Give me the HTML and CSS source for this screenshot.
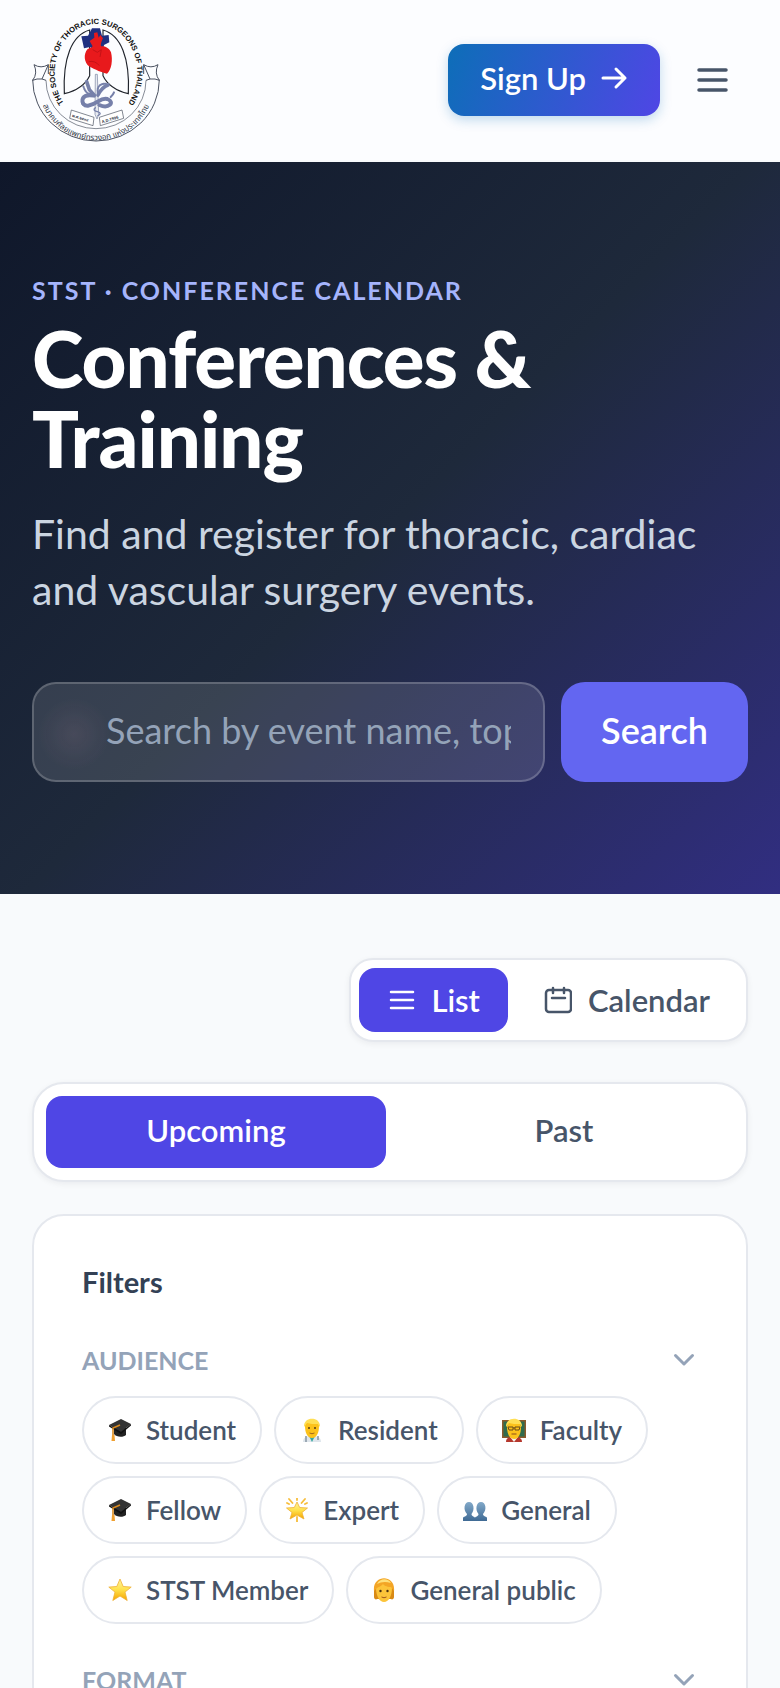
FILE: index.html
```html
<!DOCTYPE html>
<html lang="en">
<head>
<meta charset="utf-8">
<meta name="viewport" content="width=device-width, initial-scale=1">
<title>Conferences &amp; Training</title>
<link rel="stylesheet" href="styles.css">
</head>
<body>
<svg class="defs" aria-hidden="true">
  <defs>
    <linearGradient id="gold" x1="0" y1="0" x2="0" y2="1"><stop offset="0" stop-color="#fff3a0"/><stop offset=".5" stop-color="#ffe14a"/><stop offset="1" stop-color="#f5a300"/></linearGradient>
    <linearGradient id="blue" x1="0" y1="0" x2="0" y2="1"><stop offset="0" stop-color="#82a9c9"/><stop offset="1" stop-color="#3f6a94"/></linearGradient>
    <symbol id="cap" viewBox="0 0 24 24">
      <path d="M6 10v6c2 3 9 4 12 1v-7z" fill="#222"/>
      <path d="M1 7 13 1l10 5-10 8z" fill="#333"/>
      <path d="M1 7 13 14l10-8v1.500L13 16 1 8.500z" fill="#111"/>
      <path d="M12 7 5 10v8" fill="none" stroke="#d98a1f" stroke-width="1.600"/>
      <path d="M4 17h2.500l.5 6H3.500z" fill="#f0a030"/>
    </symbol>
    <symbol id="doctor" viewBox="0 0 24 24">
      <path d="M3 24c0-5 4-6 9-6s9 1 9 6z" fill="#dfe6ec"/>
      <path d="m9 18 3 6 3-6z" fill="#35a7a0"/>
      <path d="M6 18v6M18 18v4" stroke="#8795a3" stroke-width="1.500"/>
      <path d="M5 8c0-9 14-9 14 0 0 6-2 12-7 12S5 14 5 8z" fill="#fcc21b"/>
      <path d="M4 9C3-2 21-2 20 9l-2-3c-4 0-8 0-11-1z" fill="#ffdf55"/>
      <circle cx="9" cy="10" r="1" fill="#543b18"/><circle cx="15" cy="10" r="1" fill="#543b18"/>
      <path d="M9.500 15q2.500 1.500 5 0" stroke="#a0661c" fill="none"/>
    </symbol>
    <symbol id="teacher" viewBox="0 0 24 24">
      <path d="M0 2h24v18H0z" fill="#8b5a2b"/><path d="M1.500 3.500h21v15h-21z" fill="#2f6b4c"/>
      <path d="M4 24c0-4 3-5 8-5s8 1 8 5z" fill="#b5372c"/><path d="m8 19 4 5 4-5z" fill="#f4f1e8"/>
      <path d="M5 9c0-9 14-9 14 0 0 6-2 12-7 12S5 15 5 9z" fill="#fcc21b"/>
      <path d="M4 9C3-2 21-2 20 9l-2-3c-4 0-8 0-11-1z" fill="#ffdf55"/>
      <path d="M6 9h5v3H7zM13 9h5l-1 3h-4zM11 10h2" fill="none" stroke="#6b4a18"/>
      <path d="M9.500 16h5" stroke="#8d4c1c"/>
    </symbol>
    <symbol id="star" viewBox="0 0 24 24">
      <path d="m12 1 3.200 7.500 8 .6-6.200 5 2.200 8.400L12 18l-7.200 4.500L7 14.100l-6.200-5 8-.6z" fill="url(#gold)" stroke="#efb035" stroke-width=".8" stroke-linejoin="round"/>
    </symbol>
    <symbol id="glow" viewBox="0 0 24 24">
      <path d="m12 4 2.700 5.500 7.800.5-5.500 4.500 2 6.500-7-4-7 4 2-6.500L1.500 10l7.800-.5z" fill="url(#gold)" stroke="#efb035" stroke-width=".8" stroke-linejoin="round"/>
      <path d="m4 1 3.500 4M20 1l-3.500 4M12 0v2M2 5l2 1M22 5l-2 1M12 19v5" stroke="#f7bd3a" stroke-width="1.800" stroke-linecap="round"/>
    </symbol>
    <symbol id="people" viewBox="0 0 24 24">
      <g fill="url(#blue)"><path d="M0 23v-3c0-2 4-1 4-4-4-4-3-12 2-12s6 8 2.500 12c0 3 3.500 2 3.500 4v3z"/><path d="M12 23v-3c0-2 3.500-1 3.500-4C12 12 13 4 18 4s6 8 2 12c0 3 4 2 4 4v3z"/></g>
    </symbol>
    <symbol id="person" viewBox="0 0 24 24">
      <path d="M2 10h20v9c0 2-2 3-3 2H5c-1 1-3 0-3-2z" fill="#d98a16"/>
      <path d="M4 10c0-11 16-11 16 0 0 7-3 14-8 14S4 17 4 10z" fill="#fcc43a"/>
      <path d="M2 13C0-4 24-4 22 13l-3-4c-5 0-7-2-8-3-1 2-5 3-6 4z" fill="#f3a526"/>
      <path d="M5 6c3-6 11-6 14-1-6-2-10-1-14 1z" fill="#ffe07a"/>
      <circle cx="8.500" cy="13" r="1.200" fill="#4b3210"/><circle cx="15.500" cy="13" r="1.200" fill="#4b3210"/>
      <path d="M9.500 19q2.500 1.500 5 0" stroke="#a0561c" fill="none"/>
    </symbol>
    <symbol id="chevron" viewBox="0 0 28 28"><path d="m5.500 9.500 8.500 8.500 8.500-8.500" fill="none" stroke="currentColor" stroke-width="3" stroke-linecap="round" stroke-linejoin="round"/></symbol>
  </defs>
</svg>

<header class="topbar">
  <a class="logo" href="#" aria-label="The Society of Thoracic Surgeons of Thailand">
    <svg viewBox="36 33 384 384" width="128" height="128">
      <defs>
        <path id="arc-top" d="M141 307A124 146 0 1 1 315 307"/>
        <path id="arc-low" d="M55 236A173 170 0 0 0 401 236"/>
      </defs>
      <g fill="none" stroke="#4a5160" stroke-width="3">
        <path d="M38 224A190 184 0 0 0 418 224"/>
        <path d="M78 226A150 145 0 0 0 378 226" stroke-width="2"/>
        <path d="M38 226Q54 205 42 179Q63 192 85 179L66 222M85 179V207M38 226Q50 220 66 222L78 226"/>
        <path d="M418 226Q402 205 414 179Q393 192 371 179L390 222M371 179V207M418 226Q406 220 390 222L378 226"/>
      </g>
      <g fill="none" stroke="#20242c" stroke-width="3.500">
        <path d="M209 75C155 90 128 160 133 266Q190 252 209 212Z"/>
        <path d="M249 75C303 90 330 160 325 266Q268 252 249 212Z"/>
      </g>
      <path d="M184 94l20-2 12-22h24l6 22 20-2 2 22-16 8-8 16h-20l-14-10-18 4z" fill="#203080"/>
      <path d="M203 132c-14 16-10 40 4 52 18 10 40 20 54 22 14-10 18-42 12-64-6-16-22-20-30-18-2-8 4-20 6-24l-8-10-5 8-4-16-10 2 1 14-14 10 8 14c2 6-8 6-14 10z" fill="#e8191c"/>
      <path d="M218 134l14 8 12-8-4 22M206 170q20-4 32 12" fill="none" stroke="#b40f14" stroke-width="2"/>
      <path d="M226 208h6l4 120-5 14-6-14z" fill="#e8ebf2" stroke="#78829f" stroke-width="2"/>
      <g fill="none" stroke="#7680aa" stroke-linecap="round">
        <path d="M200 230l8 24 14 16M264 240q-18 6-30 30" stroke-width="11"/>
        <path d="M190 244q8 24 24 24M258 236q-30 0-24 30" stroke-width="6" stroke-dasharray="3 3"/>
        <path d="M222 272c-44-10-42 32-18 30 30-4 36-26 58-20 24 10 4 30-24 18" stroke-width="12"/>
        <path d="M204 302q-26 0-15-18M272 276q8-8 10-14" stroke-width="6"/>
        <path d="M226 308q-10 8 6 12t2 12" stroke-width="4"/>
      </g>
      <g fill="#fff" stroke="#444b5a" stroke-width="2">
        <path d="m154 315 68 22-3 25-70-22z"/><path d="m306 315-68 22 3 25 70-22z"/>
      </g>
      <text class="seal-year" x="155" y="335" transform="rotate(17 155 335)">พ.ศ.๒๕๓๙</text>
      <text class="seal-year" x="247" y="355" transform="rotate(-17 247 355)">A.D.1996</text>
      <text class="seal-en"><textPath href="#arc-top" startOffset="50%" text-anchor="middle">THE SOCIETY OF THORACIC SURGEONS OF THAILAND</textPath></text>
      <text class="seal-th"><textPath href="#arc-low" startOffset="50%" text-anchor="middle">สมาคมศัลยแพทย์ทรวงอก แห่งประเทศไทย</textPath></text>
    </svg>
  </a>
  <div class="actions">
    <button class="signup" type="button">Sign Up
      <svg viewBox="0 0 28 28" width="28" height="28" aria-hidden="true"><path d="M3 14h22M16 5l9 9-9 9" fill="none" stroke="currentColor" stroke-width="3" stroke-linecap="round" stroke-linejoin="round"/></svg>
    </button>
    <button class="menu" type="button" aria-label="Menu">
      <svg viewBox="0 0 40 40" width="40" height="40" aria-hidden="true"><path d="M7 10h27M7 20h27M7 30h27" stroke="currentColor" stroke-width="3.500" stroke-linecap="round"/></svg>
    </button>
  </div>
</header>

<section class="hero">
  <p class="eyebrow">STST · Conference Calendar</p>
  <h1>Conferences &amp; Training</h1>
  <p class="lead">Find and register for thoracic, cardiac and vascular surgery events.</p>
  <form class="search">
    <input type="text" aria-label="Search events" placeholder="Search by event name, topic or venue">
    <button type="submit">Search</button>
  </form>
</section>

<main class="content">
  <div class="view-toggle">
    <button class="active" type="button" aria-pressed="true">
      <svg viewBox="0 0 28 28" width="28" height="28" aria-hidden="true"><path d="M4 6h22M4 14h22M4 22h22" stroke="currentColor" stroke-width="2.500" stroke-linecap="round"/></svg>List
    </button>
    <button type="button" aria-pressed="false">
      <svg viewBox="0 0 28 28" width="28" height="28" aria-hidden="true"><g fill="none" stroke="currentColor" stroke-width="2.500" stroke-linecap="round" stroke-linejoin="round"><rect x="2" y="4" width="25" height="22" rx="3"/><path d="M9 2v5M20 2v5M8 12h13"/></g></svg>Calendar
    </button>
  </div>

  <div class="tabs">
    <button class="active" type="button" aria-pressed="true">Upcoming</button>
    <button type="button" aria-pressed="false">Past</button>
  </div>

  <section class="filters">
    <h2>Filters</h2>
    <button class="group" type="button" aria-expanded="true">Audience<svg width="28" height="28" aria-hidden="true"><use href="#chevron"/></svg></button>
    <div class="chips">
      <button type="button"><svg width="24" height="24" aria-hidden="true"><use href="#cap"/></svg>Student</button>
      <button type="button"><svg width="24" height="24" aria-hidden="true"><use href="#doctor"/></svg>Resident</button>
      <button type="button"><svg width="24" height="24" aria-hidden="true"><use href="#teacher"/></svg>Faculty</button>
      <button type="button"><svg width="24" height="24" aria-hidden="true"><use href="#cap"/></svg>Fellow</button>
      <button type="button"><svg width="24" height="24" aria-hidden="true"><use href="#glow"/></svg>Expert</button>
      <button type="button"><svg width="24" height="24" aria-hidden="true"><use href="#people"/></svg>General</button>
      <button type="button"><svg width="24" height="24" aria-hidden="true"><use href="#star"/></svg>STST Member</button>
      <button type="button"><svg width="24" height="24" aria-hidden="true"><use href="#person"/></svg>General public</button>
    </div>
    <button class="group" type="button" aria-expanded="false">Format<svg width="28" height="28" aria-hidden="true"><use href="#chevron"/></svg></button>
  </section>
</main>
</body>
</html>
```
FILE: styles.css
```css
* {
  box-sizing: border-box;
}

body {
  margin: 0;
  background: #f8fafc;
  color: #475569;
  font-family: Lato, "Noto Sans", sans-serif;
}

button,
input {
  margin: 0;
  border: 0;
  background: none;
  color: inherit;
  font: inherit;
}

button {
  cursor: pointer;
}

svg {
  display: block;
  flex: none;
}

h1,
h2,
p {
  margin: 0;
}

.defs {
  position: absolute;
  width: 0;
  height: 0;
}

.topbar {
  display: flex;
  align-items: center;
  justify-content: space-between;
  padding: 16px 32px;
  border-bottom: 2px solid #f8fafc;
  background: #fcfdff;
}

.seal-en {
  fill: #111;
  font: bold 23px "Liberation Sans", Arial, sans-serif;
}

.seal-th {
  fill: #333a48;
  font: 24px "Noto Sans Thai", "Noto Sans", sans-serif;
}

.seal-year {
  fill: #333a48;
  font: bold 12px "Noto Sans Thai", "Liberation Serif", serif;
}

.actions {
  display: flex;
  align-items: center;
  gap: 16px;
}

.signup {
  display: flex;
  align-items: center;
  gap: 14px;
  height: 72px;
  padding: 0 32px 4px;
  border-radius: 16px;
  background: linear-gradient(110deg, #0d6eb8, #4f46e5);
  box-shadow: 0 4px 12px rgba(14, 110, 184, 0.25);
  color: #fff;
  font-size: 31px;
  font-weight: 600;
}

.menu {
  display: grid;
  place-items: center;
  width: 72px;
  height: 72px;
  padding: 0;
}

.hero {
  padding: 112px 32px;
  background: linear-gradient(135deg, #0f172a, #1e293b 50%, #312e81);
  color: #fff;
}

.eyebrow {
  margin-bottom: 12px;
  color: #a5b4fc;
  font-size: 25px;
  font-weight: 700;
  line-height: 32px;
  letter-spacing: 2px;
  text-transform: uppercase;
}

h1 {
  max-width: 640px;
  margin-bottom: 28px;
  font-size: 78px;
  font-weight: 900;
  line-height: 80px;
  letter-spacing: -1px;
}

.lead {
  max-width: 700px;
  margin-bottom: 64px;
  color: #cbd5e1;
  font-size: 41px;
  line-height: 56px;
}

.search {
  display: flex;
  gap: 16px;
}

.search input {
  flex: 1;
  min-width: 0;
  height: 100px;
  padding: 0 32px 4px 72px;
  border: 2px solid rgba(255, 255, 255, 0.2);
  border-radius: 24px;
  background: radial-gradient(circle at 40px 50px, rgba(255, 180, 200, 0.08), transparent 36px), rgba(255, 255, 255, 0.12);
  font-size: 36px;
}

.search input::placeholder {
  color: #94a3b8;
  opacity: 1;
}

.search button {
  padding: 0 40px 4px;
  border-radius: 24px;
  background: #6366f1;
  font-size: 36px;
  font-weight: 600;
}

.content {
  display: flex;
  flex-direction: column;
  padding: 64px 32px 0;
}

.view-toggle {
  display: flex;
  align-self: flex-end;
  gap: 8px;
  margin-bottom: 40px;
  padding: 8px;
  border: 2px solid #e5e8ee;
  border-radius: 24px;
  background: #fff;
  box-shadow: 0 2px 6px rgba(15, 23, 42, 0.06);
}

.view-toggle button {
  display: flex;
  align-items: center;
  gap: 16px;
  height: 64px;
  padding: 0 28px;
  border-radius: 16px;
  font-size: 31px;
  font-weight: 600;
}

.tabs {
  display: grid;
  grid-template-columns: 1fr 1fr;
  gap: 8px;
  margin-bottom: 32px;
  padding: 12px;
  border: 2px solid #e5e8ee;
  border-radius: 32px;
  background: #fff;
  box-shadow: 0 2px 6px rgba(15, 23, 42, 0.06);
}

.tabs button {
  height: 72px;
  padding: 0 0 4px;
  border-radius: 16px;
  font-size: 31px;
  font-weight: 600;
}

.view-toggle .active,
.tabs .active {
  background: #4f46e5;
  color: #fff;
}

.filters {
  padding: 46px 48px 48px;
  border: 2px solid #e5e8ee;
  border-radius: 32px;
  background: #fff;
}

h2 {
  margin-bottom: 40px;
  color: #334155;
  font-size: 29px;
  font-weight: 700;
  line-height: 40px;
}

.group {
  display: flex;
  align-items: center;
  justify-content: space-between;
  width: 100%;
  height: 36px;
  padding: 0;
  color: #94a3b8;
  font-size: 25px;
  font-weight: 700;
  text-transform: uppercase;
}

.chips {
  display: flex;
  flex-wrap: wrap;
  gap: 12px;
  margin: 18px 0 38px;
}

.chips button {
  display: flex;
  align-items: center;
  gap: 14px;
  height: 68px;
  padding: 0 24px;
  border: 2px solid #e5e8ee;
  border-radius: 34px;
  font-size: 26px;
  font-weight: 600;
}
```
